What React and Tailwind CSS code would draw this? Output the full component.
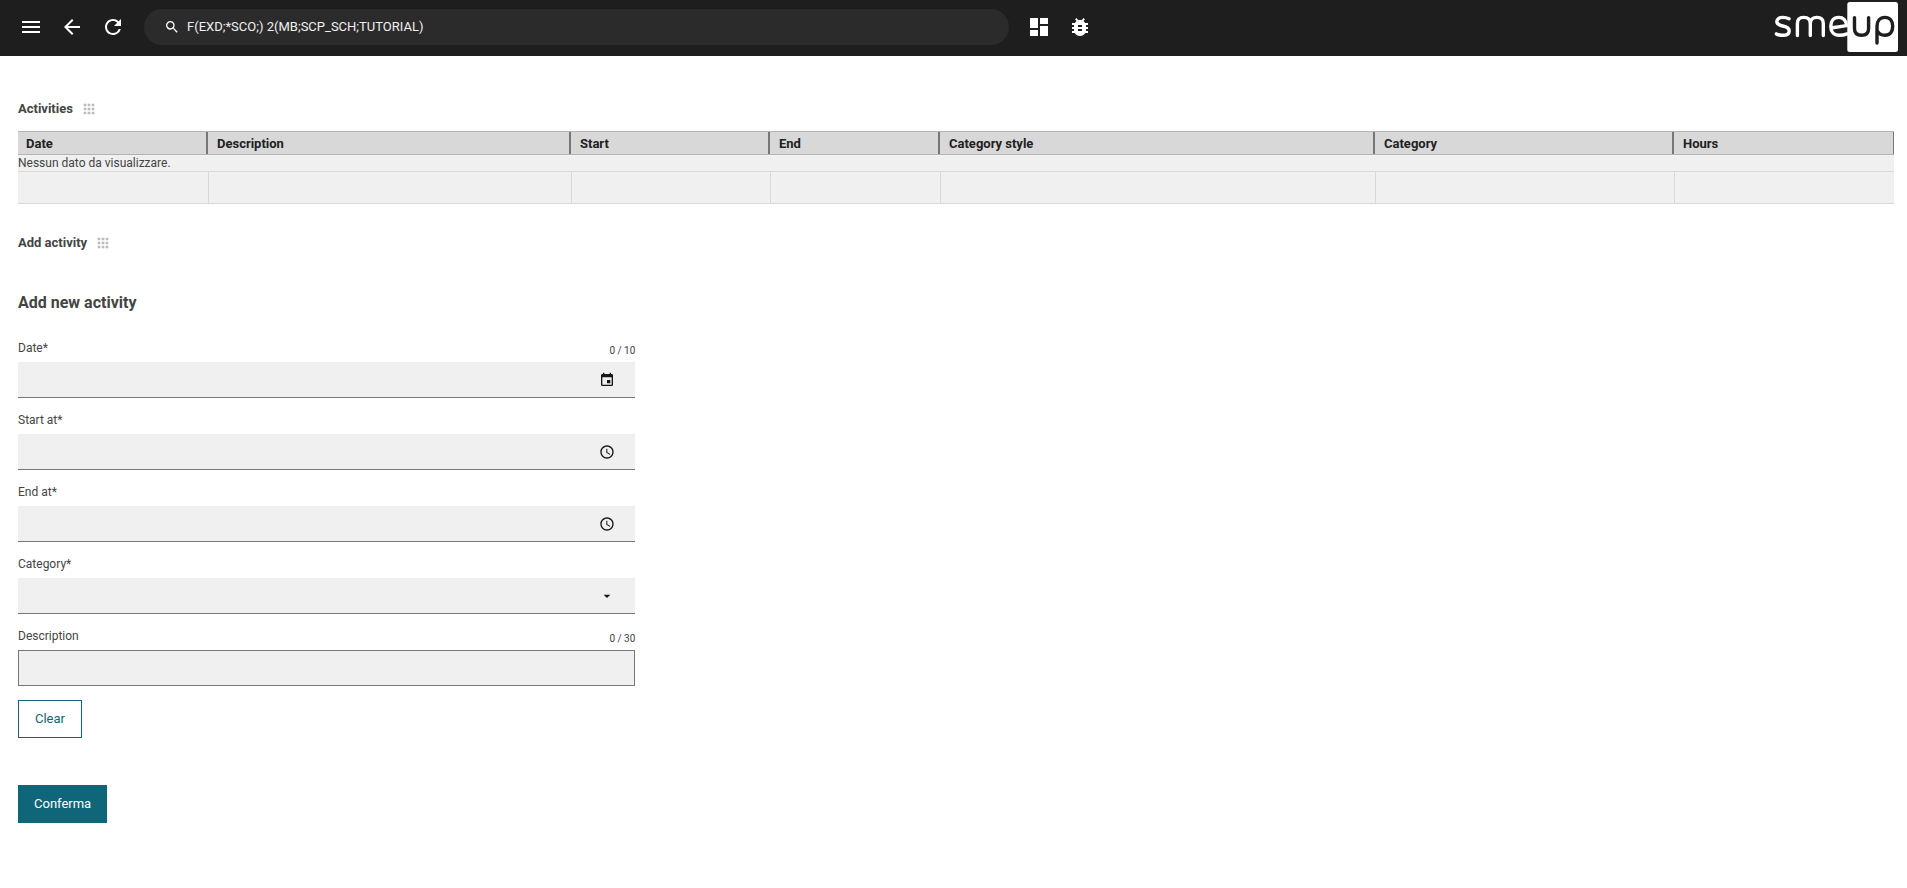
import { MdMenu, MdArrowBack, MdRefresh, MdSearch, MdDashboard, MdBugReport, MdApps, MdEvent, MdAccessTime, MdArrowDropDown } from "react-icons/md";

const columns = [
  { label: "Date", width: "w-[191px]" },
  { label: "Description", width: "w-[363px]" },
  { label: "Start", width: "w-[199px]" },
  { label: "End", width: "w-[170px]" },
  { label: "Category style", width: "w-[435px]" },
  { label: "Category", width: "w-[299px]" },
  { label: "Hours", width: "w-[219px]" },
];

function BarButton({ label, icon: Icon }) {
  return (
    <button type="button" aria-label={label} className="flex h-10 w-[41px] items-center justify-center text-white">
      <Icon className="size-6" />
    </button>
  );
}

function Logo() {
  return (
    <svg viewBox="0 0 124 50" className="h-[50px] w-[124px]" role="img" aria-label="smeup">
      <g fill="none" stroke="#fff" strokeWidth="3.4" strokeLinecap="round" strokeLinejoin="round">
        <path d="M15 16.8C13 15.800 11 15.400 8.800 15.400C5.200 15.400 2.800 17 2.800 19.600C2.800 22.300 5 23.200 8.800 24C12.800 24.800 15.200 26 15.200 29C15.200 31.800 12.600 33.300 8.800 33.300C6.200 33.300 4 32.800 2.400 31.900" />
        <path d="M23.400 33.500V21.500C23.400 17.700 25.700 15.400 29.700 15.400C33.900 15.400 36.300 17.700 36.300 21.500V33.500M36.300 21.500C36.300 17.700 38.900 15.400 42.900 15.400C47.100 15.400 49.300 17.700 49.300 21.500V33.500" />
        <path d="M57 26L72.600 23.600C72 18.300 69.400 15.400 64.700 15.400C59.600 15.400 56.800 18.800 56.800 24.400C56.800 30 59.900 33.300 65.300 33.300C68.100 33.300 70.600 32.900 73 31.900" />
      </g>
      <rect x="73.300" y="0" width="50.700" height="50" rx="2.500" fill="#fff" />
      <g fill="none" stroke="#1e1e1e" strokeWidth="3.4" strokeLinecap="round" strokeLinejoin="round">
        <path d="M80.500 15.600V26.500C80.500 31 83 33.300 87.500 33.300C92 33.300 94.600 31 94.600 26.500V15.600" />
        <path d="M103 41V24.300C103 18.800 106 15.400 110.900 15.400C115.900 15.400 118.700 18.800 118.700 24.300C118.700 29.900 115.900 33.300 111 33.300C107.500 33.300 104.500 31.500 103.200 28.600" />
      </g>
    </svg>
  );
}

function SectionTitle({ children }) {
  return (
    <div className="flex h-5 items-center gap-2">
      <h2 className="text-[13px] font-bold text-[#444]">{children}</h2>
      <MdApps className="size-4 text-[#bdbdbd]" />
    </div>
  );
}

function Field({ id, label, counter, children }) {
  return (
    <div>
      <div className="flex h-6 items-start justify-between">
        <label htmlFor={id} className="text-[12px] leading-5 text-[#444]">{label}</label>
        {counter && <span className="pt-1 text-[10px] leading-[18px] text-[#444]">{counter}</span>}
      </div>
      <div className="relative">{children}</div>
    </div>
  );
}

const boxClass = "block h-9 w-full appearance-none rounded-none bg-[#f0f0f0] px-4 text-[13px] text-[#161616] outline-none";

function PickerField({ id, label, counter, icon: Icon, action }) {
  return (
    <Field id={id} label={label} counter={counter}>
      <input id={id} type="text" className={boxClass + " border-b border-[#767676]"} />
      <button type="button" aria-label={action} className="absolute inset-y-0 right-5 flex items-center text-[#161616]">
        <Icon className="size-4" />
      </button>
    </Field>
  );
}

export default function App() {
  return (
    <div className="min-h-screen bg-white font-['Roboto','Liberation_Sans',sans-serif]">
      <header className="flex h-14 items-start bg-[#1e1e1e] pl-[10px] pr-[9px]">
        <nav className="flex h-[54px] items-center">
          <BarButton label="Menu" icon={MdMenu} />
          <BarButton label="Back" icon={MdArrowBack} />
          <BarButton label="Refresh" icon={MdRefresh} />
        </nav>
        <div className="mt-[9px] ml-[11px] flex h-9 w-[45.8%] items-center gap-[7px] rounded-full bg-[#2b2b2b] px-5 text-white">
          <MdSearch className="size-4 shrink-0" />
          <input aria-label="Search" defaultValue="F(EXD;*SCO;) 2(MB;SCP_SCH;TUTORIAL)" className="min-w-0 flex-1 bg-transparent text-[13px] leading-5 text-[#f0f0f0] outline-none" />
        </div>
        <div className="ml-[10px] flex h-[54px] items-center">
          <BarButton label="Dashboard" icon={MdDashboard} />
          <BarButton label="Debug" icon={MdBugReport} />
        </div>
        <a href="#" aria-label="smeup" className="mt-0.5 ml-auto">
          <Logo />
        </a>
      </header>

      <main className="pt-[43px] pr-[13px] pl-[18px]">
        <section>
          <SectionTitle>Activities</SectionTitle>
          <table className="mt-3 w-full table-fixed border-separate border-spacing-0 text-left text-[#444]">
            <thead>
              <tr>
                {columns.map((c, i) => (
                  <th key={c.label} className={c.width + " h-6 border-y border-y-[#b4b4b4] bg-[#d8d8d8] p-0 text-[13px] leading-[23px] font-bold text-[#212121]"}>
                    <div className={i < columns.length - 1 ? "mr-px h-[22px] border-r-2 border-[#767676] pl-2" : "h-[22px] border-r border-[#767676] pl-2"}>{c.label}</div>
                  </th>
                ))}
              </tr>
            </thead>
            <tbody>
              <tr>
                <td colSpan={7} className="h-[17px] border-b border-[#d8d8d8] bg-[#f0f0f0] p-0 text-[12px] leading-4">Nessun dato da visualizzare.</td>
              </tr>
              <tr>
                {columns.map((c, i) => (
                  <td key={c.label} className={i < columns.length - 1 ? "h-8 border-r border-b border-[#d8d8d8] bg-[#f0f0f0] p-0" : "h-8 border-b border-[#d8d8d8] bg-[#f0f0f0] p-0"} />
                ))}
              </tr>
            </tbody>
          </table>
        </section>

        <section className="mt-[29px]">
          <SectionTitle>Add activity</SectionTitle>
          <h1 className="mt-10 text-[16px] leading-5 font-bold text-[#444]">Add new activity</h1>
          <form className="mt-[25px] w-1/3 pr-2" onSubmit={(e) => e.preventDefault()}>
            <div className="flex flex-col gap-3">
              <PickerField id="date" label="Date*" counter="0 / 10" icon={MdEvent} action="Pick a date" />
              <PickerField id="start" label="Start at*" icon={MdAccessTime} action="Pick a start time" />
              <PickerField id="end" label="End at*" icon={MdAccessTime} action="Pick an end time" />
              <Field id="category" label="Category*">
                <select id="category" className={boxClass + " border-b border-[#767676]"} />
                <MdArrowDropDown className="pointer-events-none absolute top-[10px] right-5 size-4 text-[#161616]" />
              </Field>
              <Field id="description" label="Description" counter="0 / 30">
                <input id="description" type="text" className={boxClass + " border border-[#767676]"} />
              </Field>
            </div>
            <button type="reset" className="mt-[14px] block h-[38px] border border-[#0e6678] px-4 text-[13px] text-[#0e6678]">Clear</button>
            <button type="submit" className="mt-[47px] block h-[38px] bg-[#0e6678] px-4 text-[13px] text-white">Conferma</button>
          </form>
        </section>
      </main>
    </div>
  );
}
